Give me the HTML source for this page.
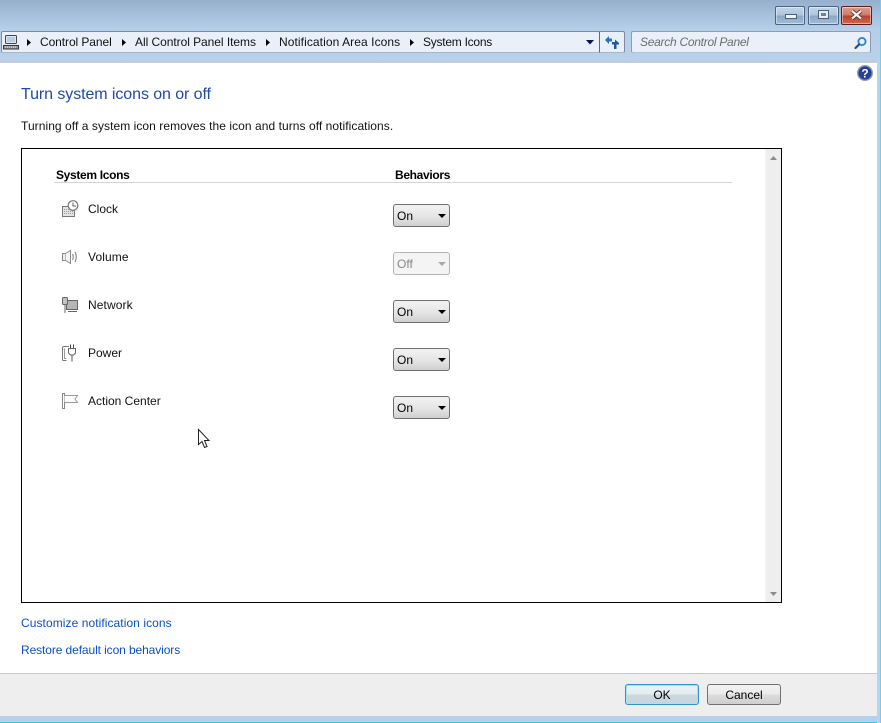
<!DOCTYPE html>
<html><head><meta charset="utf-8"><style>
html,body{margin:0;padding:0}
body{width:881px;height:723px;overflow:hidden;position:relative;font-family:"Liberation Sans",sans-serif;font-size:12px;color:#000;background:#b8cfe9}
.a{position:absolute;white-space:nowrap}
.t{position:absolute;white-space:nowrap;line-height:15px;color:#111}
.l{color:#0a50c8}
.sel{position:absolute;left:393px;width:55px;height:21px;border:1px solid #6f6f6f;border-radius:3px;background:linear-gradient(#f2f2f2 0,#e6e6e6 50%,#d0d0d0 100%)}
.sel span{position:absolute;left:3px;top:4px;line-height:15px}
.sel i{position:absolute;left:44px;top:9px;width:0;height:0;border-left:4px solid transparent;border-right:4px solid transparent;border-top:4px solid #000}
.btn{position:absolute;top:684px;height:19px;border:1px solid #707070;border-radius:3px;background:linear-gradient(#f2f2f2 0,#ebebeb 48%,#dcdcdc 52%,#cfcfcf 100%);text-align:center;line-height:21px}
.wb{position:absolute;top:6px;height:17px;border:1px solid #4d6480;border-radius:2px;background:linear-gradient(#c3d4e7 0,#afc5dd 48%,#8ba7c5 52%,#a4bdd8 100%);box-shadow:inset 0 0 0 1px rgba(255,255,255,.45)}
svg{position:absolute;overflow:visible}
</style></head><body>
<div class="a" style="left:0;top:0;width:881px;height:60px;background:linear-gradient(#95afcd 0,#a3bcd8 12px,#b6cfe9 30px,#b9d1ea 60px)"></div>

<!-- window buttons -->
<div class="wb" style="left:775px;width:28px"><div class="a" style="left:9px;top:7px;width:12px;height:5px;background:#eef3f8;border:1px solid #4a5f78;box-sizing:border-box"></div></div>
<div class="wb" style="left:808px;width:29px"><div class="a" style="left:9px;top:3px;width:11px;height:9px;border:1px solid #4a5f78;box-sizing:border-box;background:#e6edf5"><div class="a" style="left:2px;top:2px;width:5px;height:3px;background:#6c829c"></div></div></div>
<div class="wb" style="left:841px;width:29px;border-color:#5e1f1a;background:linear-gradient(#dc9c8e 0,#d07a68 48%,#b9402c 52%,#cc6a50 100%)">
<svg style="left:9px;top:3px" width="11" height="9"><path d="M1 1L10 8.500M10 1L1 8.500" stroke="#4b2f2c" stroke-width="3.800"/><path d="M1 1L10 8.500M10 1L1 8.500" stroke="#f4f0ee" stroke-width="2.200"/></svg></div>

<!-- address bar -->
<div class="a" style="left:1px;top:31px;width:597px;height:20px;border:1px solid #7c8ba0;border-bottom-color:#aab6c6;border-radius:2px;background:#e9f0f9"></div>
<div class="a" style="left:599px;top:31px;width:24px;height:20px;border:1px solid #7c8ba0;border-bottom-color:#aab6c6;border-left:1px solid #5e6b7c;border-radius:0 2px 2px 0;background:#e9f0f9"></div>
<div class="a" style="left:631px;top:31px;width:238px;height:20px;border:1px solid #8c9db2;border-bottom-color:#b5c2d1;border-radius:2px;background:#e9f0f9"></div>

<svg style="left:3px;top:34px" width="17" height="16"><rect x="2.500" y="1.500" width="11" height="8" rx="1" fill="#dfe8f1" stroke="#444"/><rect x="4" y="3" width="8" height="5" fill="#b9cde3"/><rect x=".5" y="11.500" width="15" height="3.500" fill="#999" stroke="#333"/><path d="M2 13h12" stroke="#eee" stroke-dasharray="1 1"/></svg>
<svg style="left:26px;top:39px" width="6" height="7"><path d="M1 0L5 3.500L1 7z" fill="#000"/></svg>
<div class="t" style="left:40px;top:35px;letter-spacing:-.08px">Control Panel</div>
<svg style="left:121px;top:39px" width="6" height="7"><path d="M1 0L5 3.500L1 7z" fill="#000"/></svg>
<div class="t" style="left:135px;top:35px;letter-spacing:-.05px">All Control Panel Items</div>
<svg style="left:265px;top:39px" width="6" height="7"><path d="M1 0L5 3.500L1 7z" fill="#000"/></svg>
<div class="t" style="left:279px;top:35px;letter-spacing:.08px">Notification Area Icons</div>
<svg style="left:409px;top:39px" width="6" height="7"><path d="M1 0L5 3.500L1 7z" fill="#000"/></svg>
<div class="t" style="left:423px;top:35px;letter-spacing:-.25px">System Icons</div>
<svg style="left:586px;top:40px" width="9" height="5"><path d="M0 0H8L4 4.500z" fill="#0a1450"/></svg>
<svg style="left:604px;top:35px" width="16" height="15"><path d="M1 5L5 1V3.500H8V6.500H5V9z" fill="#2a6fb8"/><path d="M15 8L11 4.500V7H8V9.500H10V14H12.500V9.500H15z" fill="#1d5a9e"/></svg>
<div class="t" style="left:640px;top:35px;color:#6d6d6d;font-style:italic;letter-spacing:-.27px">Search Control Panel</div>
<svg style="left:853px;top:35px" width="15" height="15"><circle cx="9" cy="6.500" r="3.600" fill="#e8f1fa" stroke="#2f7fc8" stroke-width="1.800"/><path d="M6 9.500L2.500 13" stroke="#234f86" stroke-width="2.200" stroke-linecap="round"/></svg>

<!-- content -->
<div class="a" style="left:0;top:61px;width:877px;height:2px;background:#c4ccd6"></div>
<div class="a" style="left:0;top:63px;width:877px;height:610px;background:#fff"></div>
<div class="a" style="left:0;top:673px;width:877px;height:1px;background:#c9c9c9"></div>
<div class="a" style="left:0;top:674px;width:877px;height:42px;background:#eeeeee"></div>
<div class="a" style="left:0;top:716px;width:881px;height:6px;background:#b8cfe9"></div>
<div class="a" style="left:0;top:722px;width:881px;height:1px;background:#2bcde6"></div>
<div class="a" style="left:877px;top:60px;width:3px;height:663px;background:#b8d3ee"></div>
<div class="a" style="left:880px;top:0;width:1px;height:723px;background:#7fc9e8"></div>

<!-- help -->
<svg style="left:857px;top:65px" width="16" height="16"><circle cx="8" cy="8" r="7.300" fill="#24409a" stroke="#8e9bb0" stroke-width="1.400"/><text x="8" y="12.500" text-anchor="middle" font-family="Liberation Sans" font-weight="bold" font-size="12" fill="#fff">?</text></svg>

<div class="t" style="left:21px;top:86px;font-size:16px;line-height:18px;color:#1f4aa8;letter-spacing:-.08px">Turn system icons on or off</div>
<div class="t" style="left:21px;top:119px;letter-spacing:.06px">Turning off a system icon removes the icon and turns off notifications.</div>

<!-- box -->
<div class="a" style="left:21px;top:148px;width:759px;height:453px;border:1px solid #000;background:#fff"></div>
<div class="a" style="left:765px;top:149px;width:16px;height:453px;background:#eeeeee;border-left:1px solid #f6f6f6;box-sizing:border-box"></div>
<svg style="left:769px;top:156px" width="9" height="5"><path d="M4.500 0L8 4H1z" fill="#8a8a8a"/></svg>
<svg style="left:769px;top:592px" width="9" height="5"><path d="M1 0H8L4.500 4z" fill="#8a8a8a"/></svg>

<div class="t" style="left:56px;top:168px;font-weight:bold;color:#000;letter-spacing:-.33px">System Icons</div>
<div class="t" style="left:395px;top:168px;font-weight:bold;color:#000;letter-spacing:-.33px">Behaviors</div>
<div class="a" style="left:54px;top:182px;width:678px;height:1px;background:#d5d5d5"></div>

<!-- clock -->
<svg style="left:61px;top:200px" width="18" height="18"><rect x="1.500" y="6.500" width="12" height="10" fill="#e4e4e4" stroke="#777"/><path d="M3 9.500h9M3 11.500h9M3 13.500h9" stroke="#999" stroke-dasharray="1 1"/><circle cx="12" cy="5.500" r="4.800" fill="#fff" stroke="#777" stroke-width="1.200"/><path d="M12 2.500V6H15" stroke="#666" fill="none"/></svg>
<div class="t" style="left:88px;top:202px">Clock</div>
<!-- volume -->
<svg style="left:61px;top:249px" width="18" height="16"><path d="M1.500 4.500H4.500V11.500H1.500z" fill="#eee" stroke="#888"/><path d="M4.500 4.500L9.500 1.500V14.500L4.500 11.500" fill="#f4f4f4" stroke="#888"/><path d="M11.500 5Q13 8 11.500 11M14 3Q16.500 8 14 13" stroke="#777" fill="none"/></svg>
<div class="t" style="left:88px;top:250px;letter-spacing:.1px">Volume</div>
<!-- network -->
<svg style="left:61px;top:296px" width="18" height="18"><rect x="5.500" y="4.500" width="11" height="9" fill="#b5b5b5" stroke="#666"/><path d="M7 15.500H16" stroke="#666"/><rect x="1.500" y="1.500" width="5" height="7" rx="1" fill="#fff" stroke="#666"/><path d="M3 2V8M5 2V8" stroke="#888"/><path d="M4 8.500V17" stroke="#666"/></svg>
<div class="t" style="left:88px;top:298px;letter-spacing:.1px">Network</div>
<!-- power -->
<svg style="left:61px;top:344px" width="18" height="18"><path d="M5.500 16.500H2.500Q1.500 16.500 1.500 15.500V4Q1.500 2.500 3 2.500H8" fill="none" stroke="#777"/><path d="M3.500 4.500V14.500H5.500" fill="none" stroke="#999"/><path d="M9.500 .5V4M12.500 .5V4" stroke="#444"/><path d="M7.500 4.500H14.500V9L12.500 11H9.500L7.500 9z" fill="#fff" stroke="#666"/><path d="M11 11V17.500" stroke="#555"/></svg>
<div class="t" style="left:88px;top:346px">Power</div>
<!-- flag -->
<svg style="left:61px;top:392px" width="18" height="18"><path d="M1.500 16.500V1.500H3.500V16.500z" fill="#fff" stroke="#888"/><path d="M3.500 3.500H16.500L14 7L16.500 10.500H3.500" fill="#fff" stroke="#999"/></svg>
<div class="t" style="left:88px;top:394px">Action Center</div>

<div class="sel" style="top:204px"><span>On</span><i></i></div>
<div class="sel" style="top:252px;border-color:#b4b4b4;background:#f4f4f4"><span style="color:#858585">Off</span><i style="border-top-color:#a8a8a8"></i></div>
<div class="sel" style="top:300px"><span>On</span><i></i></div>
<div class="sel" style="top:348px"><span>On</span><i></i></div>
<div class="sel" style="top:396px"><span>On</span><i></i></div>

<!-- cursor -->
<svg style="left:198px;top:429px" width="13" height="20"><path d="M.5 .5V15.500L4 12.500L6.500 18.500L9 17.500L6.500 11.500H11z" fill="#fff" stroke="#222" stroke-width="1"/></svg>

<div class="t l" style="left:21px;top:616px;letter-spacing:.07px">Customize notification icons</div>
<div class="t l" style="left:21px;top:643px;letter-spacing:-.1px">Restore default icon behaviors</div>

<div class="btn" style="left:625px;width:72px;border-color:#2f8fcf;box-shadow:inset 0 0 0 1px #a8e2f6;background:linear-gradient(#eaf2f6 0,#e2ecf1 48%,#ccd8df 52%,#c8d4db 100%)">OK</div>
<div class="btn" style="left:707px;width:72px">Cancel</div>
</body></html>
